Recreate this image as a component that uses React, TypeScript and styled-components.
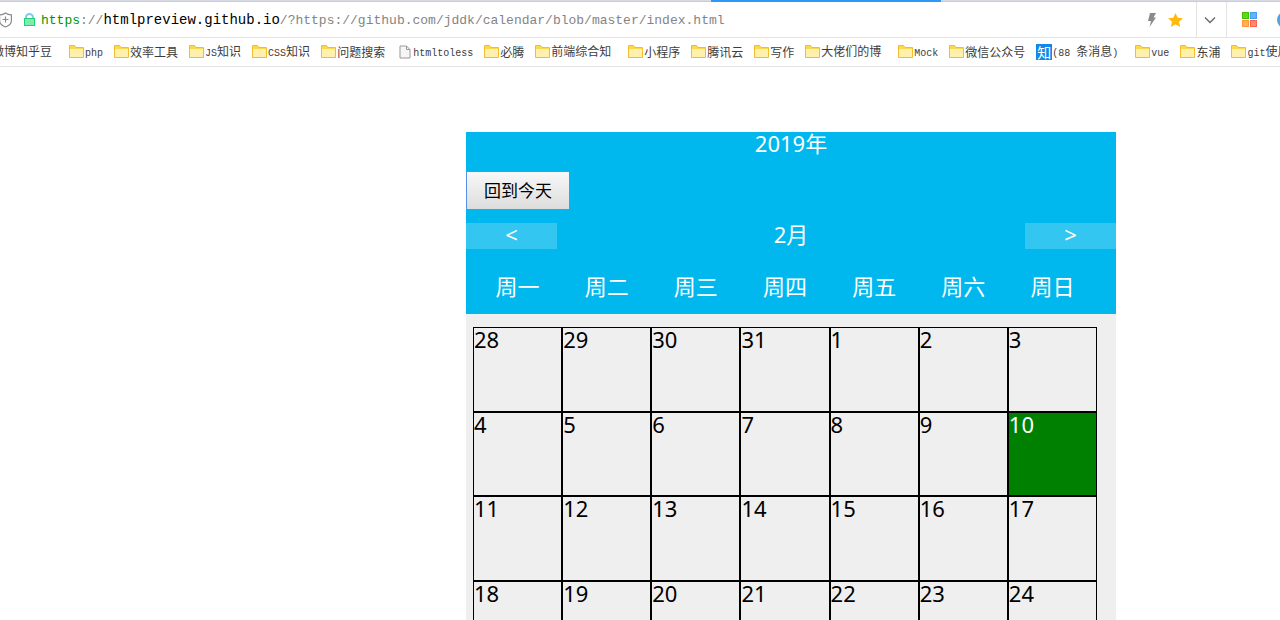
import React from "react";
import styled, { createGlobalStyle, css } from "styled-components";

const GlobalStyle = createGlobalStyle`
  *, *::before, *::after { box-sizing: border-box; }
  body {
    margin: 0;
    background: #fff;
    color: #000;
    font-family: "Noto Sans", "Noto Sans CJK SC", sans-serif;
  }
`;

const Shell = styled.div`
  display: flex;
  flex-direction: column;
  height: 100vh;
  overflow: hidden;
`;

/* ---------- browser chrome ---------- */

const TabEdge = styled.div`
  display: grid;
  grid-template-columns: 711fr 230fr 339fr;
  flex: none;
  height: 2px;
  background: #d8dbe6;
  border-bottom: 1px solid #c8ccd8;
`;

const ActiveTab = styled.span`
  grid-column: 2;
  height: 2px;
  background: #2e98f8;
`;

const AddressBar = styled.header`
  display: flex;
  flex: none;
  align-items: center;
  height: 36px;
  border-bottom: 1px solid #e3e3e3;
  overflow: hidden;
`;

const SiteIcons = styled.div`
  display: flex;
  align-items: center;
  gap: 10px;
  margin-left: -2px;
  margin-right: 5px;
`;

const Url = styled.div`
  flex: 1;
  padding-top: 2px;
  color: #848484;
  font: 13px/20px "Liberation Mono", monospace;
  white-space: nowrap;
`;

const Scheme = styled.span`
  color: #009600;
`;

const Domain = styled.span`
  color: #000;
  font-size: 14px;
`;

const ToolButton = styled.button<{ $width: number; $divided?: boolean }>`
  display: flex;
  flex: none;
  align-items: center;
  justify-content: center;
  align-self: stretch;
  width: ${(p) => p.$width}px;
  padding: 0;
  border: 0;
  background: none;
  ${(p) =>
    p.$divided &&
    css`
      padding-right: 4px;
      border-left: 1px solid #e3e3e3;
      border-right: 1px solid #e3e3e3;
    `}
`;

const ToolGroup = styled.div`
  display: flex;
  flex: none;
  align-self: stretch;
  padding-right: 9px;
`;

const Extensions = styled.div`
  display: flex;
  flex: none;
  align-self: stretch;
  width: 53px;
  padding-left: 11px;
  gap: 12px;
  overflow: hidden;
`;

const BookmarkBar = styled.nav`
  flex: none;
  height: 29px;
  border-bottom: 1px solid #e3e3e3;
  overflow: hidden;
`;

const BookmarkList = styled.ul`
  display: flex;
  align-items: center;
  gap: 11px;
  height: 28px;
  margin: 0 0 0 -24px;
  padding: 0;
  list-style: none;
`;

const Bookmark = styled.a`
  display: flex;
  align-items: center;
  color: #3c3c3c;
  font: 12px/16px "Noto Sans CJK SC", sans-serif;
  text-decoration: none;
  white-space: pre;
`;

const BookmarkIcon = styled.span<{ $wide?: boolean }>`
  display: flex;
  justify-content: center;
  width: ${(p) => (p.$wide ? 17 : 16)}px;
  height: 16px;
`;

const ZhihuIcon = styled(BookmarkIcon)`
  background: #0f88eb;
  color: #fff;
  font-size: 14px;
`;

const Latin = styled.span`
  font-family: "Liberation Mono", monospace;
  font-size: 10px;
`;

/* ---------- page ---------- */

const Page = styled.main`
  display: grid;
  flex: 1;
  grid-template-columns: 466fr 650px 164fr;
  min-height: 0;
  padding-top: 65px;
`;

const Calendar = styled.section`
  grid-column: 2;
  background: #efefef;
  font-size: 22px;
  line-height: 22px;
`;

const CalendarHead = styled.div`
  display: flex;
  flex-direction: column;
  align-items: stretch;
  gap: 13px;
  height: 182px;
  background: #00b8ee;
  color: #fff;
`;

const Year = styled.div`
  height: 26px;
  text-align: center;
`;

const TodayButton = styled.button`
  align-self: flex-start;
  width: 104px;
  height: 39px;
  padding: 0 0 2px;
  border: 1px solid #5b8ee6;
  background: linear-gradient(#f8f8f8, #dddddd);
  color: #000;
  font: 17px/24px "Noto Sans CJK SC", sans-serif;
`;

const MonthRow = styled.div`
  display: flex;
  justify-content: space-between;
  height: 26px;
`;

const StepButton = styled.button`
  width: 91px;
  height: 26px;
  padding: 0 0 4px;
  border: 0;
  background: rgba(255, 255, 255, 0.2);
  color: #fff;
  font: 22px/22px "Noto Sans", sans-serif;
`;

const Weekdays = styled.ul`
  display: grid;
  grid-template-columns: repeat(7, 1fr);
  width: 624px;
  margin: 13px 0 0 7px;
  padding: 0;
  list-style: none;
  text-align: center;
`;

const CalendarBody = styled.div`
  padding: 13px 19px 13px 7px;
`;

const Days = styled.table`
  width: 100%;
  height: 338px;
  border-spacing: 0;
  table-layout: fixed;
`;

const Day = styled.td<{ $today: boolean }>`
  padding: 0;
  border: 1px solid #000;
  vertical-align: top;
  ${(p) =>
    p.$today &&
    css`
      background: #008000;
      color: #fff;
    `}
`;

/* ---------- icons ---------- */

const ShieldIcon = () => (
  <svg width="15" height="16" viewBox="0 0 15 16" fill="none" stroke="#8a8a8a" strokeWidth="1.2">
    <path d="M7.5 1C5.8 2.3 3.7 2.9 1.6 2.9V8.5C1.6 11.8 4 13.8 7.5 15C11 13.8 13.4 11.8 13.4 8.5V2.9C11.3 2.9 9.2 2.3 7.5 1Z" />
    <path d="M7.5 4.5V10.500M4.5 7.500H10.5" />
  </svg>
);

const LockIcon = () => (
  <svg width="13" height="14" viewBox="0 0 13 14">
    <path d="M3 6V4.5a3.5 3.5 0 0 1 7 0V6" fill="none" stroke="#84c8ec" strokeWidth="2" />
    <rect x="1.5" y="5.5" width="10" height="7" fill="#7cecb0" stroke="#1fd273" />
  </svg>
);

const BoltIcon = () => (
  <svg width="10" height="14" viewBox="0 0 10 14">
    <path d="M3 0H9L6.5 4.500H9L2.500 14L4 8H1Z" fill="#8b8b8b" />
  </svg>
);

const StarIcon = () => (
  <svg width="15" height="14" viewBox="0 0 15 14">
    <path d="M7.5 0L9.7 4.8L15 5.3L11 8.8L12.2 14L7.5 11.3L2.8 14L4 8.8L0 5.3L5.3 4.8Z" fill="#ffb90f" />
  </svg>
);

const ChevronIcon = () => (
  <svg width="12" height="8" viewBox="0 0 12 8">
    <path d="M1 1.5L6 6.5L11 1.5" fill="none" stroke="#666" strokeWidth="1.3" />
  </svg>
);

const TilesIcon = () => (
  <svg width="15" height="15" viewBox="0 0 15 15">
    <rect x="0.5" y="0.5" width="6" height="6" fill="#62d818" stroke="#42c000" />
    <rect x="8.5" y="0.5" width="6" height="6" fill="#62b4fa" stroke="#429fec" />
    <rect x="0.5" y="8.5" width="6" height="6" fill="#ffb057" stroke="#ff9838" />
    <rect x="8.5" y="8.5" width="6" height="6" fill="#ff8a70" stroke="#fa6450" />
  </svg>
);

const GlobeIcon = () => (
  <svg width="16" height="16" viewBox="0 0 16 16">
    <circle cx="8" cy="8" r="8" fill="#4ea6e0" />
  </svg>
);

const FolderIcon = () => (
  <svg width="16" height="16" viewBox="0 0 16 16">
    <path d="M0.5 13.5V1.5H5.5L7 3.5H14.5V13.5Z" fill="#fbd84c" stroke="#f5bd2e" />
    <path d="M1 5H14V13H1Z" fill="#fff0ae" />
  </svg>
);

const FileIcon = () => (
  <svg width="12" height="15" viewBox="0 0 12 15">
    <path d="M1 2H7.5L11 5.5V14H1Z" fill="#f6f6f6" stroke="#999" />
    <path d="M7.5 2V5.5H11" fill="none" stroke="#999" />
  </svg>
);

/* ---------- data ---------- */

type Kind = "folder" | "file" | "zhihu";

const bookmarks: { label: string; kind?: Kind }[] = [
  { label: "微博知乎豆 " },
  { label: "php" },
  { label: "效率工具" },
  { label: "JS知识" },
  { label: "CSS知识" },
  { label: "问题搜索" },
  { label: "htmltoless", kind: "file" },
  { label: "必腾" },
  { label: "前端综合知 " },
  { label: "小程序" },
  { label: "腾讯云" },
  { label: "写作" },
  { label: "大佬们的博 " },
  { label: "Mock" },
  { label: "微信公众号" },
  { label: "(88 条消息) ", kind: "zhihu" },
  { label: "vue" },
  { label: "东浦" },
  { label: "git使用" },
];

const weekdays = ["周一", "周二", "周三", "周四", "周五", "周六", "周日"];

const weeks = [
  [28, 29, 30, 31, 1, 2, 3],
  [4, 5, 6, 7, 8, 9, 10],
  [11, 12, 13, 14, 15, 16, 17],
  [18, 19, 20, 21, 22, 23, 24],
];

const TODAY = 10;

/* Latin runs use the half-width face, so they are split from the Chinese ones. */
const labelRuns = (label: string) =>
  (label.match(/[\x20-\x7e]+|[^\x20-\x7e]+/g) ?? []).map((run, i) =>
    run.charCodeAt(0) < 128 ? <Latin key={i}>{run}</Latin> : run
  );

const iconFor = (kind: Kind = "folder") => {
  if (kind === "zhihu") return <ZhihuIcon>知</ZhihuIcon>;
  if (kind === "file")
    return (
      <BookmarkIcon $wide>
        <FileIcon />
      </BookmarkIcon>
    );
  return (
    <BookmarkIcon>
      <FolderIcon />
    </BookmarkIcon>
  );
};

export default function App() {
  return (
    <Shell>
      <GlobalStyle />
      <TabEdge>
        <ActiveTab />
      </TabEdge>
      <AddressBar>
        <SiteIcons>
          <ShieldIcon />
          <LockIcon />
        </SiteIcons>
        <Url>
          <Scheme>https</Scheme>://<Domain>htmlpreview.github.io</Domain>
          /?https://github.com/jddk/calendar/blob/master/index.html
        </Url>
        <ToolGroup>
          <ToolButton $width={24} aria-label="加速">
            <BoltIcon />
          </ToolButton>
          <ToolButton $width={23} aria-label="收藏">
            <StarIcon />
          </ToolButton>
        </ToolGroup>
        <ToolButton $width={31} $divided aria-label="展开">
          <ChevronIcon />
        </ToolButton>
        <Extensions>
          <ToolButton $width={23} aria-label="扩展">
            <TilesIcon />
          </ToolButton>
          <ToolButton $width={23} aria-label="浏览器">
            <GlobeIcon />
          </ToolButton>
        </Extensions>
      </AddressBar>
      <BookmarkBar>
        <BookmarkList>
          {bookmarks.map(({ label, kind }) => (
            <li key={label}>
              <Bookmark href="#">
                {iconFor(kind)}
                <span>{labelRuns(label)}</span>
              </Bookmark>
            </li>
          ))}
        </BookmarkList>
      </BookmarkBar>
      <Page>
        <Calendar>
          <CalendarHead>
            <Year>2019年</Year>
            <TodayButton>回到今天</TodayButton>
            <MonthRow>
              <StepButton aria-label="上个月">&lt;</StepButton>
              <span>2月</span>
              <StepButton aria-label="下个月">&gt;</StepButton>
            </MonthRow>
            <Weekdays>
              {weekdays.map((name) => (
                <li key={name}>{name}</li>
              ))}
            </Weekdays>
          </CalendarHead>
          <CalendarBody>
            <Days>
              <tbody>
                {weeks.map((week) => (
                  <tr key={week[0]}>
                    {week.map((day) => (
                      <Day key={day} $today={day === TODAY}>
                        {day}
                      </Day>
                    ))}
                  </tr>
                ))}
              </tbody>
            </Days>
          </CalendarBody>
        </Calendar>
      </Page>
    </Shell>
  );
}
